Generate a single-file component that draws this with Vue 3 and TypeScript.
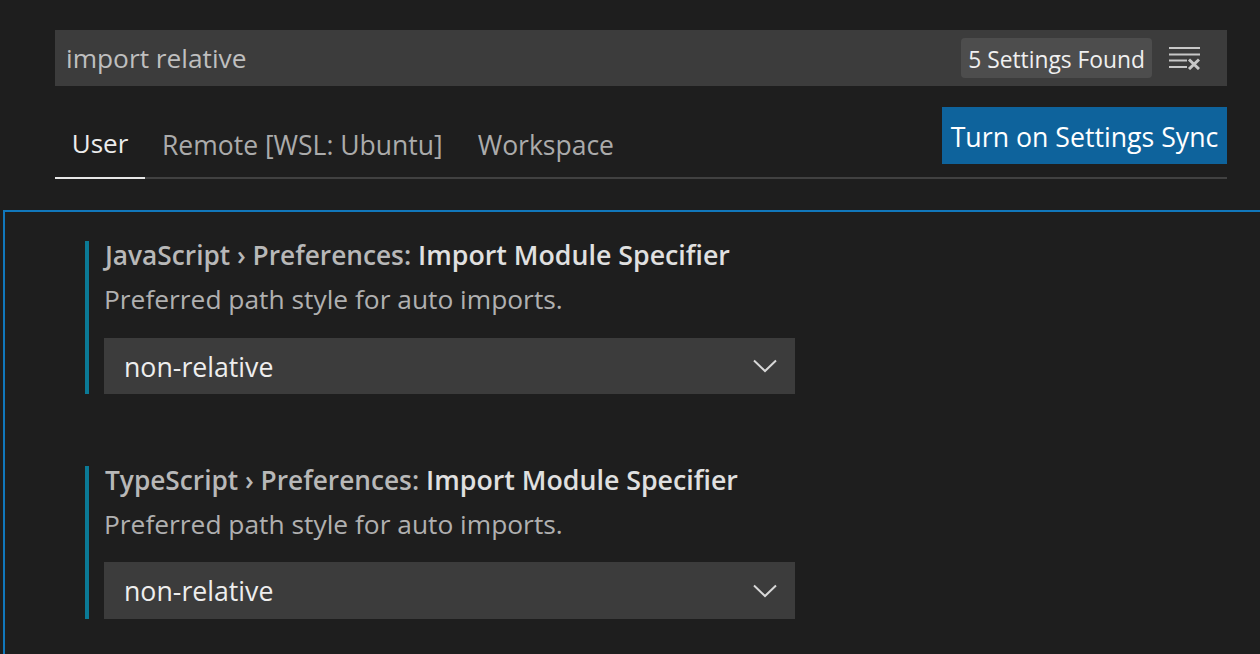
<script setup lang="ts">
interface Setting {
  category: string;
  name: string;
  description: string;
  value: string;
}

const settings: Setting[] = [
  {
    category: "JavaScript › Preferences:",
    name: "Import Module Specifier",
    description: "Preferred path style for auto imports.",
    value: "non-relative",
  },
  {
    category: "TypeScript › Preferences:",
    name: "Import Module Specifier",
    description: "Preferred path style for auto imports.",
    value: "non-relative",
  },
];
</script>

<template>
  <div class="editor">
    <header class="header">
      <div class="search">
        <span class="query">import relative</span>
        <span class="count">5 Settings Found</span>
        <svg class="clear" width="32" height="24" viewBox="0 0 32 24" fill="none" stroke="#c8c8c8" stroke-width="2">
          <path d="M1 2H32M1 8.500H32M1 14.500H19M1 21H19" />
          <path d="M21 13.500L31 23M31 13.500L21 23" stroke-width="3" />
        </svg>
      </div>
      <div class="tabs-row">
        <nav class="tabs">
          <a class="tab active">User</a>
          <a class="tab">Remote [WSL: Ubuntu]</a>
          <a class="tab">Workspace</a>
        </nav>
        <button class="sync">Turn on Settings Sync</button>
      </div>
    </header>

    <main class="list">
      <section v-for="s in settings" :key="s.category" class="setting">
        <div class="title">
          <span class="category">{{ s.category }}</span>
          <span class="name">{{ s.name }}</span>
        </div>
        <p class="description">{{ s.description }}</p>
        <div class="select">
          <span>{{ s.value }}</span>
          <svg width="24" height="14" viewBox="0 0 24 14" fill="none" stroke="#d8d8d8" stroke-width="2">
            <path d="M1 1.500L12 12L23 1.500" />
          </svg>
        </div>
      </section>
    </main>
  </div>
</template>

<style>
html,
body {
  margin: 0;
  background: #1e1e1e;
  overflow: hidden;
}
</style>

<style scoped>
.editor {
  width: 1260px;
  height: 654px;
  box-sizing: border-box;
  padding-top: 30px;
  padding-left: 3px;
  overflow: hidden;
  background: #1e1e1e;
  font-family: "Open Sans", "Noto Sans", sans-serif;
  color: #cccccc;
}

.header {
  margin-left: 52px;
  width: 1172px;
}

.search {
  height: 56px;
  display: flex;
  align-items: center;
  padding: 0 27px 0 11px;
  background: #3c3c3c;
  font-size: 26.3px;
}

.query {
  flex: 1;
  color: #bfbfbf;
}

.count {
  height: 40px;
  line-height: 43px;
  padding: 0 7px;
  margin-right: 16px;
  border-radius: 4px;
  background: #4d4d4d;
  color: #f0f0f0;
  font-size: 22.8px;
  white-space: nowrap;
}

.tabs-row {
  margin-top: 21px;
  height: 72px;
  display: flex;
  justify-content: space-between;
  align-items: flex-start;
  border-bottom: 2px solid #414141;
  box-sizing: border-box;
}

.tabs {
  display: flex;
  height: 72px;
}

.tab {
  height: 72px;
  box-sizing: border-box;
  padding: 0 18px 0 17px;
  line-height: 76px;
  font-size: 26.5px;
  color: #ababab;
  white-space: nowrap;
}

.tab.active {
  padding: 0;
  width: 90px;
  text-align: center;
  line-height: 72px;
  font-size: 26px;
  color: #ececec;
  border-bottom: 2px solid #e7e7e7;
}

.sync {
  width: 285px;
  height: 57px;
  padding: 2px 0 0;
  border: none;
  background: #0e639c;
  color: #ffffff;
  font-family: inherit;
  font-size: 26.7px;
  white-space: nowrap;
}

.list {
  margin-top: 31px;
  height: 460px;
  box-sizing: border-box;
  border-top: 2px solid #1177bb;
  border-left: 2px solid #1177bb;
  padding: 29px 0 0 80px;
}

.setting {
  box-sizing: border-box;
  height: 153px;
  margin-bottom: 72px;
  padding-left: 15px;
  border-left: 4px solid #0b7a96;
}

.title {
  height: 30px;
  line-height: 28px;
  padding-left: 1px;
  font-size: 26.25px;
  font-weight: 600;
  white-space: nowrap;
}

.category {
  color: #b8b8b8;
  margin-right: 7px;
}

.name {
  color: #e0e0e0;
  font-size: 26.75px;
}

.description {
  margin: 14px 0 0;
  height: 30px;
  line-height: 28px;
  font-size: 26.35px;
  color: #b0b0b0;
}

.select {
  margin-top: 23px;
  width: 691px;
  height: 56px;
  box-sizing: border-box;
  padding: 0 18px 0 20px;
  display: flex;
  align-items: center;
  justify-content: space-between;
  background: #3c3c3c;
  color: #eeeeee;
  font-size: 26.7px;
}

.setting:last-child .select {
  margin-top: 22px;
  height: 57px;
}
</style>
